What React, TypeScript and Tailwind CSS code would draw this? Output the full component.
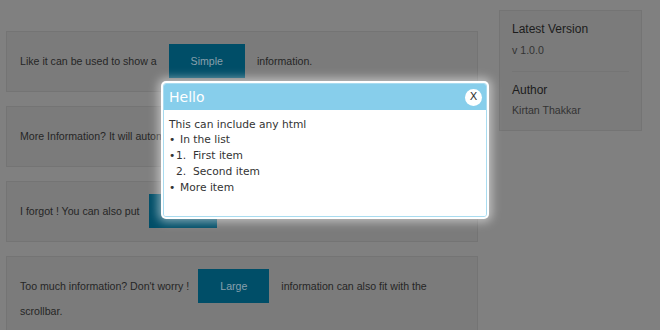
import React from 'react';

const pageFont = { fontFamily: '"Liberation Sans", Arial, sans-serif' };
const modalFont = { fontFamily: '"DejaVu Sans", Verdana, sans-serif' };

// page colours are the dimmed ones (page sits behind the modal backdrop)
function Btn({ children }: { children: React.ReactNode }) {
  return (
    <span className="mx-[9px] inline bg-[#004e68] px-[22px] py-[11px] text-[#88a0ad]">
      {children}
    </span>
  );
}

function Card({ children }: { children: React.ReactNode }) {
  return (
    <div className="border border-[#747474] bg-[#7b7b7b] px-[13px] py-[17px] text-[10.6px] leading-[25px] text-[#262626]">
      {children}
    </div>
  );
}

export default function App() {
  return (
    <div className="relative min-h-screen overflow-hidden bg-[#808080]" style={pageFont}>
      <div className="flex gap-[21px] pl-[6px] pt-[10px]">
        <div className="flex w-[472px] flex-col gap-[14px] pt-[21px]">
          <Card>
            Like it can be used to show a <Btn>Simple</Btn> information.
          </Card>
          <Card>
            More Information? It will automatically <Btn>Medium</Btn> adjust.
          </Card>
          <Card>
            I forgot ! You can also put<Btn>Links</Btn> in it.
          </Card>
          <Card>
            Too much information? Don't worry !<Btn>Large</Btn> information can also fit with the
            scrollbar.
          </Card>
        </div>

        <div className="w-[143px] self-start border border-[#747474] bg-[#7b7b7b] px-[12px] pb-[11px] pt-[9px]">
          <div className="text-[12px] leading-[18px] text-[#1c1c1c]">Latest Version</div>
          <div className="mt-[3px] text-[10.6px] leading-[18px] text-[#333]">v 1.0.0</div>
          <div className="mt-[12px] border-t border-[#757575]" />
          <div className="mt-[9px] text-[12px] leading-[18px] text-[#1c1c1c]">Author</div>
          <div className="mt-[2px] text-[10.6px] leading-[18px] text-[#333]">Kirtan Thakkar</div>
        </div>
      </div>

      {/* modal */}
      <div
        className="absolute left-[161px] top-[81px] w-[328px] rounded-[5px] bg-white p-[2px] shadow-[0_0_10px_3px_rgba(255,255,255,0.5)]"
        style={modalFont}
      >
        <div className="overflow-hidden rounded-[3px] border border-[#a9dcf0]">
          <div className="flex h-[26px] items-center justify-between bg-[#87ceeb] pl-[5px] pr-[4px]">
            <span className="text-[14px] text-white">Hello</span>
            <span className="flex h-[17px] w-[17px] items-center justify-center rounded-full bg-white text-[11px] text-[#333]">
              X
            </span>
          </div>
          <div className="h-[106px] bg-white px-[5px] pt-[7px] text-[10.7px] leading-[16px] text-[#333]">
            <div className="leading-[15px]">This can include any html</div>
            <div className="flex">
              <span className="w-[11px]">•</span>
              <span>In the list</span>
            </div>
            <div className="flex">
              <span className="w-[7px]">•</span>
              <span className="w-[17px]">1.</span>
              <span>First item</span>
            </div>
            <div className="flex">
              <span className="w-[7px]" />
              <span className="w-[17px]">2.</span>
              <span>Second item</span>
            </div>
            <div className="flex">
              <span className="w-[11px]">•</span>
              <span>More item</span>
            </div>
          </div>
        </div>
      </div>
    </div>
  );
}
